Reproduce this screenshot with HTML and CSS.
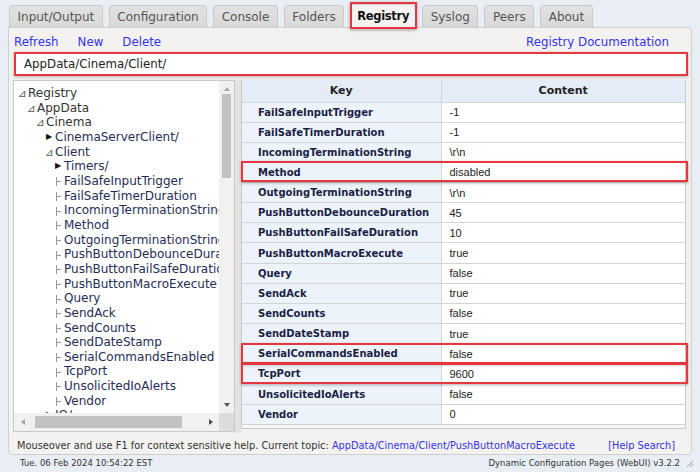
FILE: index.html
```html
<!DOCTYPE html>
<html>
<head>
<meta charset="utf-8">
<link rel="stylesheet" href="styles.css">
</head>
<body>
<div class="tabs">
  <div class="tab">Input/Output</div>
  <div class="tab">Configuration</div>
  <div class="tab">Console</div>
  <div class="tab">Folders</div>
  <div class="tab active">Registry</div>
  <div class="tab">Syslog</div>
  <div class="tab">Peers</div>
  <div class="tab">About</div>
</div>
<div class="panel">
  <div class="toolbar">
    <a class="link">Refresh</a>
    <a class="link">New</a>
    <a class="link">Delete</a>
    <span class="spacer"></span>
    <a class="link">Registry Documentation</a>
  </div>
  <div class="path">AppData/Cinema/Client/</div>
  <div class="main">
    <div class="tree">
      <div class="tree-view">
        <div class="tree-items">
          <div class="ti l0"><span class="open">⊿</span>Registry</div>
          <div class="ti l1"><span class="open">⊿</span>AppData</div>
          <div class="ti l2"><span class="open">⊿</span>Cinema</div>
          <div class="ti l3"><span class="closed">▶</span>CinemaServerClient/</div>
          <div class="ti l3"><span class="open">⊿</span>Client</div>
          <div class="ti l4"><span class="closed">▶</span>Timers/</div>
          <div class="ti l4"><span class="leaf"></span>FailSafeInputTrigger</div>
          <div class="ti l4"><span class="leaf"></span>FailSafeTimerDuration</div>
          <div class="ti l4"><span class="leaf"></span>IncomingTerminationString</div>
          <div class="ti l4"><span class="leaf"></span>Method</div>
          <div class="ti l4"><span class="leaf"></span>OutgoingTerminationString</div>
          <div class="ti l4"><span class="leaf"></span>PushButtonDebounceDuration</div>
          <div class="ti l4"><span class="leaf"></span>PushButtonFailSafeDuration</div>
          <div class="ti l4"><span class="leaf"></span>PushButtonMacroExecute</div>
          <div class="ti l4"><span class="leaf"></span>Query</div>
          <div class="ti l4"><span class="leaf"></span>SendAck</div>
          <div class="ti l4"><span class="leaf"></span>SendCounts</div>
          <div class="ti l4"><span class="leaf"></span>SendDateStamp</div>
          <div class="ti l4"><span class="leaf"></span>SerialCommandsEnabled</div>
          <div class="ti l4"><span class="leaf"></span>TcpPort</div>
          <div class="ti l4"><span class="leaf"></span>UnsolicitedIoAlerts</div>
          <div class="ti l4"><span class="leaf"></span>Vendor</div>
          <div class="ti l3"><span class="closed">▶</span>IO/</div>
        </div>
        <div class="vscroll">
          <span class="arrow up"></span>
          <span class="vthumb"></span>
          <span class="arrow down"></span>
        </div>
      </div>
      <div class="hscroll-row">
        <div class="hscroll">
          <span class="arrow left"></span>
          <span class="hthumb"></span>
          <span class="arrow right"></span>
        </div>
        <div class="corner"></div>
      </div>
    </div>
    <div class="splitter"></div>
    <div class="grid-wrap">
      <table class="grid">
        <thead>
          <tr><th class="kh">Key</th><th>Content</th></tr>
        </thead>
        <tbody>
          <tr><td class="k">FailSafeInputTrigger</td><td class="v">-1</td></tr>
          <tr><td class="k">FailSafeTimerDuration</td><td class="v">-1</td></tr>
          <tr><td class="k">IncomingTerminationString</td><td class="v">\r\n</td></tr>
          <tr><td class="k">Method</td><td class="v">disabled</td></tr>
          <tr><td class="k">OutgoingTerminationString</td><td class="v">\r\n</td></tr>
          <tr><td class="k">PushButtonDebounceDuration</td><td class="v">45</td></tr>
          <tr><td class="k">PushButtonFailSafeDuration</td><td class="v">10</td></tr>
          <tr><td class="k">PushButtonMacroExecute</td><td class="v">true</td></tr>
          <tr><td class="k">Query</td><td class="v">false</td></tr>
          <tr><td class="k">SendAck</td><td class="v">true</td></tr>
          <tr><td class="k">SendCounts</td><td class="v">false</td></tr>
          <tr><td class="k">SendDateStamp</td><td class="v">true</td></tr>
          <tr><td class="k">SerialCommandsEnabled</td><td class="v">false</td></tr>
          <tr><td class="k">TcpPort</td><td class="v">9600</td></tr>
          <tr><td class="k">UnsolicitedIoAlerts</td><td class="v">false</td></tr>
          <tr><td class="k">Vendor</td><td class="v">0</td></tr>
        </tbody>
      </table>
      <div class="hl hl-method"></div>
      <div class="hl hl-serial"></div>
      <div class="hl hl-tcp"></div>
    </div>
  </div>
  <div class="help">
    <span>Mouseover and use F1 for context sensitive help. Current topic: <a class="link">AppData/Cinema/Client/PushButtonMacroExecute</a></span>
    <a class="link">[Help Search]</a>
  </div>
</div>
<div class="status">
  <span>Tue. 06 Feb 2024 10:54:22 EST</span>
  <span class="right">Dynamic Configuration Pages (WebUI) v3.2.2
    <svg class="grip" width="9" height="9" viewBox="0 0 9 9"><path d="M8 2 L2 8 M8 5 L5 8" stroke="#9a9a9a" stroke-width="1" fill="none"/></svg>
  </span>
</div>
</body>
</html>
```
FILE: styles.css
```css
* { box-sizing: border-box; }
html, body { margin: 0; padding: 0; }
body {
  width: 700px;
  height: 472px;
  overflow: hidden;
  background: #e9eef5;
  font-family: "DejaVu Sans", Verdana, sans-serif;
  color: #222;
}
.tabs {
  display: flex;
  gap: 6px;
  padding: 5px 0 0 9px;
  height: 27px;
}
.tab {
  height: 22px;
  padding: 0 7.5px;
  font-size: 12px;
  line-height: 22px;
  color: #555;
  background: linear-gradient(#e2e2e2, #d8d8d8);
  border: 1px solid #c9c9c9;
  border-bottom: none;
  border-radius: 4px 4px 0 0;
}
.tab.active {
  position: relative;
  color: #111;
  font-weight: bold;
  font-size: 11.5px;
  letter-spacing: -0.3px;
  padding: 0 6px;
  background: #f4f3f2;
  height: 23px;
  margin-top: -1px;
  line-height: 23px;
  z-index: 2;
  border-color: #d0d0d0;
}
.tab.active::after {
  content: "";
  position: absolute;
  left: -1px; right: -2px; top: -3px; bottom: -2px;
  border: 2px solid #e8363f;
  box-shadow: 0 1px 3px rgba(0,0,0,0.35);
}
.panel {
  margin: 0 8px;
  height: 428px;
  background: #f3f2f1;
  border: 1px solid #cfcfcf;
  border-radius: 0 4px 4px 4px;
  display: flex;
  flex-direction: column;
  padding: 0 4px 0 4px;
}
.panel > * { flex: none; }
.link { color: #3434e8; text-decoration: none; }
.toolbar {
  display: flex;
  gap: 19px;
  font-size: 11.8px;
  height: 24px;
  padding: 7px 0 0 1px;
}
.spacer { flex: 1; }
.toolbar .link:last-child { margin-right: 18px; }
.path {
  height: 24px;
  background: #fff;
  border: 2px solid #e8363f;
  box-shadow: 0 1px 3px rgba(0,0,0,0.25);
  font-size: 11.8px;
  line-height: 20px;
  padding-left: 8px;
  color: #222;
  margin-left: 1px;
  margin-right: -1px;
}
.main {
  display: flex;
  margin-top: 4px;
  height: 353px;
}
.tree {
  width: 222px;
  border: 1px solid #c9c9c9;
  background: #fff;
  display: flex;
  flex-direction: column;
  height: 352px;
}
.tree-view { flex: 1; display: flex; min-height: 0; }
.tree-items {
  flex: 1;
  overflow: hidden;
  padding-top: 5px;
  font-size: 12px;
  color: #262d55;
  white-space: nowrap;
}
.ti { height: 14.67px; line-height: 14.67px; display: flex; align-items: center; }
.ti.l0 { padding-left: 5px; color: #333; }
.ti.l1 { padding-left: 14px; color: #333; }
.ti.l2 { padding-left: 23px; color: #333; }
.ti.l3 { padding-left: 32px; }
.ti.l4 { padding-left: 41px; }
.ti .open, .ti .closed, .ti .leaf {
  display: inline-block;
  width: 9px;
  flex: none;
}
.ti .open { font-size: 10.5px; color: #555; margin-left: -1px; width: 10px; }
.ti .closed { font-size: 8px; color: #111; }
.ti .leaf { position: relative; height: 12px; }
.ti .leaf::before {
  content: "";
  position: absolute;
  left: 1px; top: 2px; width: 0; height: 9px;
  border-left: 1px solid #999;
}
.ti .leaf::after {
  content: "";
  position: absolute;
  left: 1px; top: 6px; width: 5px; height: 0;
  border-top: 1px solid #999;
}
.vscroll {
  width: 15px;
  background: #f1f1f1;
  display: flex;
  flex-direction: column;
  align-items: center;
}
.vthumb {
  width: 9px;
  margin-top: 3px;
  height: 84px;
  background: #c2c2c2;
}
.arrow { display: block; width: 0; height: 0; }
.arrow.up { margin-top: 6px; border: 3.5px solid transparent; border-bottom: 4px solid #a3a3a3; border-top: none; }
.arrow.down { margin-top: auto; margin-bottom: 6px; border: 3.5px solid transparent; border-top: 4px solid #505050; border-bottom: none; }
.hscroll-row { display: flex; height: 18px; }
.hscroll {
  flex: 1;
  background: #f1f1f1;
  display: flex;
  align-items: center;
}
.hthumb { width: 147px; height: 12px; background: #c2c2c2; margin-left: 10px; }
.arrow.left { margin-left: 7px; border: 3.5px solid transparent; border-right: 4px solid #a3a3a3; border-left: none; }
.arrow.right { margin-left: auto; margin-right: 6px; border: 3.5px solid transparent; border-left: 4px solid #505050; border-right: none; }
.corner { width: 15px; background: #dcdcdc; }
.splitter { width: 6px; background: #e4e3e2; }
.grid-wrap {
  position: relative;
  flex: 1;
  height: 349px;
  border: 1px solid #c9c9c9;
  border-top: none;
  background: #f8f8f8;
  margin-right: 1px;
}
.grid {
  width: 100%;
  border-collapse: collapse;
  table-layout: fixed;
}
.grid th {
  height: 22px;
  font-size: 11px;
  font-weight: bold;
  color: #222;
  background: #e4edf7;
  border: 1px solid #cfd6de;
  border-top: none;
  padding: 0;
}
.grid th.kh { width: 199px; }
.grid td {
  height: 20.15px;
  padding: 0;
  border: 1px solid #d4d4d4;
}
.grid td.k {
  background: #edf3fa;
  font-weight: bold;
  font-size: 10px;
  color: #1b1f45;
  padding-left: 16px;
  white-space: nowrap;
}
.grid td.v {
  background: #fff;
  font-family: "Liberation Sans", Arial, sans-serif;
  font-size: 11px;
  color: #222;
  padding-left: 8px;
}
.grid tr > :first-child { border-left: none; }
.grid tr > :last-child { border-right: none; }
.hl {
  position: absolute;
  left: -1px;
  right: -3px;
  height: 21px;
  border: 2px solid #e8363f;
  box-shadow: 0 1px 3px rgba(0,0,0,0.3);
}
.hl-method { top: 81px; }
.hl-serial { top: 263px; }
.hl-tcp { top: 283px; }
.help {
  display: flex;
  justify-content: space-between;
  font-size: 9.8px;
  color: #333;
  padding: 7px 12px 0 4px;
  white-space: nowrap;
}
.status {
  display: flex;
  justify-content: space-between;
  font-size: 8.5px;
  color: #333;
  padding: 3px 6px 0 20px;
}
.status .right { display: flex; align-items: center; gap: 5px; }
.grip { display: block; }
```
